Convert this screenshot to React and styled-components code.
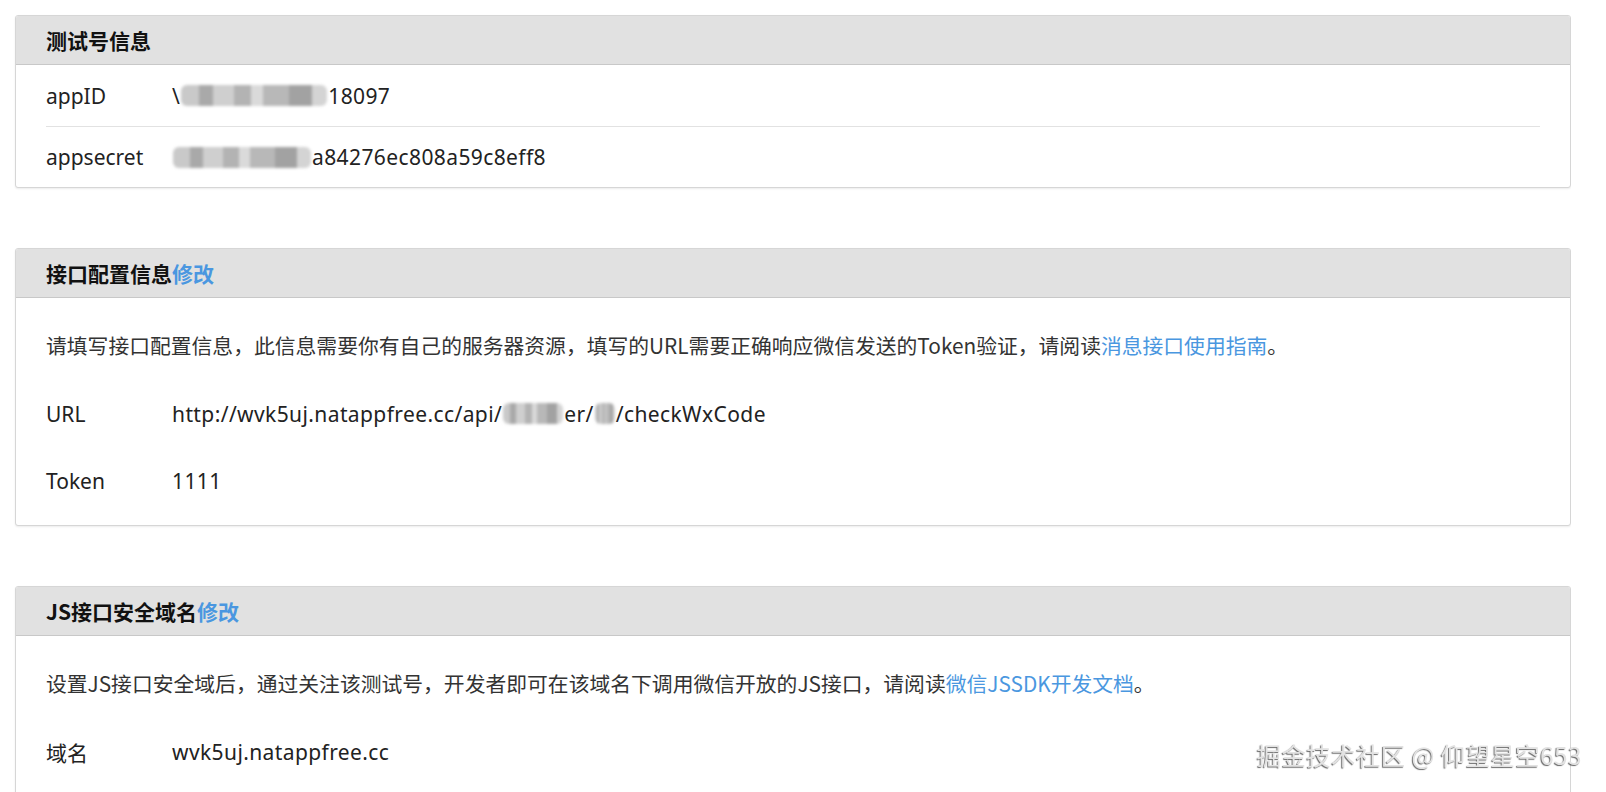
import React from 'react'
import styled, { createGlobalStyle } from 'styled-components'

const GlobalStyle = createGlobalStyle`
  html, body {
    margin: 0;
    padding: 0;
    background: #fff;
    height: 792px;
    overflow: hidden;
  }
  body {
    font-family: "Noto Sans", "Noto Sans CJK SC", sans-serif;
    color: #222;
  }
`

const Page = styled.div`
  box-sizing: border-box;
  width: 1571px;
  height: 792px;
  overflow: hidden;
  padding: 15px 0 0 15px;
  display: flex;
  flex-direction: column;
  gap: 60px;
`

const Panel = styled.section`
  flex: none;
  border: 1px solid #d6d6d6;
  border-radius: 3px;
  box-shadow: 0 1px 2px rgba(0, 0, 0, 0.08);
  background: #fff;
  overflow: hidden;
`

const Header = styled.div`
  height: 48px;
  background: #e1e1e1;
  border-bottom: 1px solid #c8c8c8;
  display: flex;
  align-items: center;
  padding: 0 30px;
  font-family: "Noto Sans CJK SC", sans-serif;
  font-weight: 700;
  font-size: 21px;
  color: #111;
`

const Link = styled.a`
  color: #4a97e0;
  text-decoration: none;
  cursor: pointer;
  font-weight: ${p => (p.bold ? 700 : 400)};
`

const Body = styled.div`
  padding: ${p => (p.rows ? '0 30px' : '12px 30px 11px')};
`

const Row = styled.div`
  height: ${p => (p.h || 67)}px;
  display: flex;
  align-items: center;
  font-size: 21px;
  border-top: ${p => (p.divided ? '1px solid #e2e2e2' : 'none')};
  box-sizing: border-box;
`

const Label = styled.span`
  width: 126px;
  flex: none;
`

const Value = styled.span`
  display: flex;
  align-items: center;
  white-space: pre;
  letter-spacing: 0.4px;
`

const Desc = styled.p`
  margin: 0;
  height: 70px;
  display: flex;
  align-items: center;
  font-size: 20.8px;
  color: #333;
  font-family: "Noto Sans CJK SC", sans-serif;
`

const Blur = styled.span`
  display: inline-block;
  width: ${p => p.w}px;
  height: 21px;
  background: linear-gradient(
    90deg,
    #c9c9c9 0 12%,
    #a9a9a9 12% 22%,
    #cfcfcf 22% 36%,
    #b3b3b3 36% 48%,
    #dadada 48% 56%,
    #b8b8b8 56% 74%,
    #a2a2a2 74% 90%,
    #d4d4d4 90% 100%
  );
  filter: blur(1.5px);
  border-radius: 6px;
  margin: 0 1px;
`

const Watermark = styled.div`
  position: fixed;
  right: 24px;
  bottom: 25px;
  line-height: 1;
  font-family: "Noto Sans CJK SC", sans-serif;
  font-size: 24.3px;
  color: #e2e2e2;
  text-shadow: -1px 1px 1px rgba(0, 0, 0, 0.6);
  letter-spacing: 0.5px;
`

export default function App() {
  return (
    <>
      <GlobalStyle />
      <Page>
        <Panel>
          <Header>测试号信息</Header>
          <Body rows>
            <Row h={61}>
              <Label>appID</Label>
              <Value>\<Blur w={146} />18097</Value>
            </Row>
            <Row h={61} divided>
              <Label>appsecret</Label>
              <Value><Blur w={138} />a84276ec808a59c8eff8</Value>
            </Row>
          </Body>
        </Panel>

        <Panel>
          <Header>
            接口配置信息<Link bold>修改</Link>
          </Header>
          <Body>
            <Desc>
              请填写接口配置信息，此信息需要你有自己的服务器资源，填写的URL需要正确响应微信发送的Token验证，请阅读<Link>消息接口使用指南</Link>。
            </Desc>
            <Row>
              <Label>URL</Label>
              <Value>
                http://wvk5uj.natappfree.cc/api/<Blur w={60} />er/<Blur w={20} />/checkWxCode
              </Value>
            </Row>
            <Row>
              <Label>Token</Label>
              <Value>1111</Value>
            </Row>
          </Body>
        </Panel>

        <Panel>
          <Header>
            JS接口安全域名<Link bold>修改</Link>
          </Header>
          <Body>
            <Desc>
              设置JS接口安全域后，通过关注该测试号，开发者即可在该域名下调用微信开放的JS接口，请阅读<Link>微信JSSDK开发文档</Link>。
            </Desc>
            <Row>
              <Label>域名</Label>
              <Value>wvk5uj.natappfree.cc</Value>
            </Row>
          </Body>
        </Panel>
      </Page>
      <Watermark>掘金技术社区 @ 仰望星空653</Watermark>
    </>
  )
}
